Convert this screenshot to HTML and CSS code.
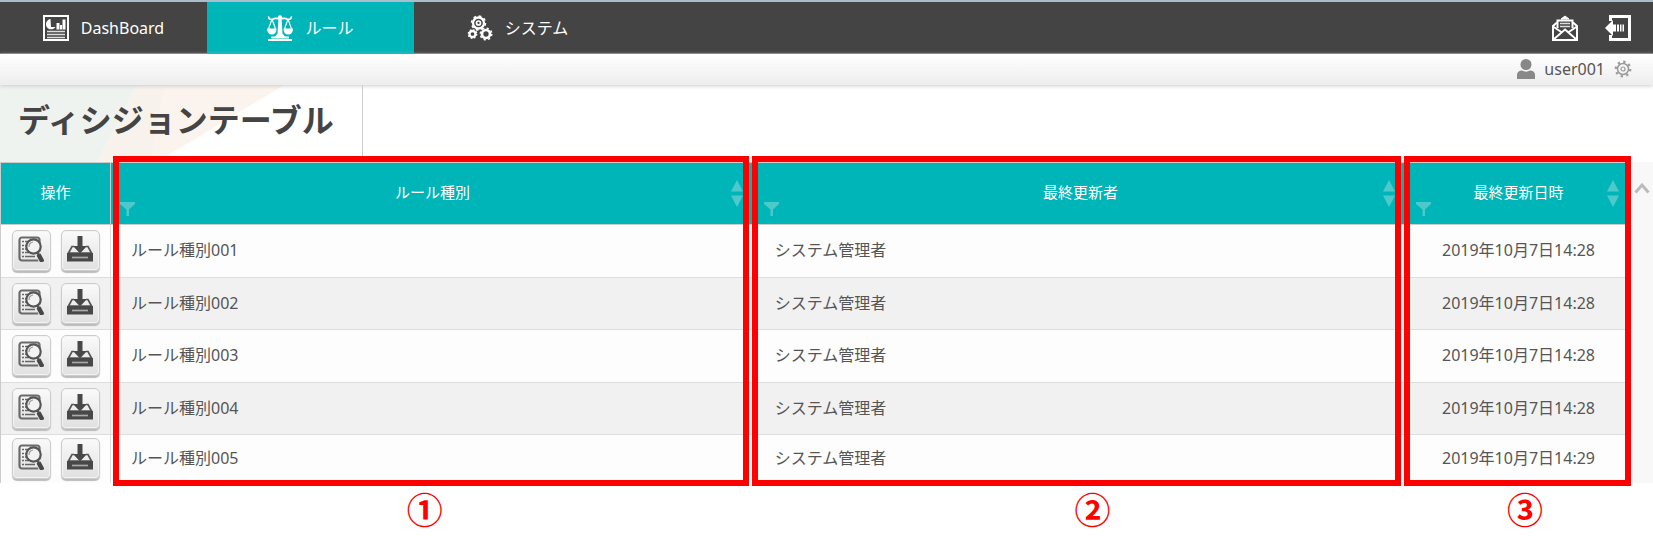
FILE: index.html
```html
<!DOCTYPE html>
<html lang="ja">
<head>
<meta charset="utf-8">
<title>ディシジョンテーブル</title>
<link rel="stylesheet" href="styles.css">
</head>
<body>
<svg class="sprite" aria-hidden="true">
  <symbol id="i-view" viewBox="0 0 26 26">
    <rect x="1.5" y="1.500" width="20" height="23" rx="2.500" fill="none" stroke="#6a6a6a" stroke-width="2.200"/>
    <path d="M4 5.500h2M4 9.500h2M4 13h2M4 16.500h2M4 20.500h2M7 5.500h4M7 9.500h2M7 13h2M7 16.500h4M7 20.500h10" stroke="#666" stroke-width="1.700"/>
    <path d="M20 17l4.500 8" stroke="#ececec" stroke-width="7"/>
    <circle cx="15.500" cy="10.500" r="7.200" fill="#f2f2f2" stroke="#555" stroke-width="2.200"/>
    <path d="M11 11a5 5 0 0 1 4-5" fill="none" stroke="#999" stroke-width="1.200"/>
    <path d="M19 16l2 3" stroke="#555" stroke-width="2.500"/>
    <path d="M20.500 18.500l4 7.500" stroke="#484848" stroke-width="4.500"/>
  </symbol>
  <symbol id="i-save" viewBox="0 0 26 26">
    <path d="M10.500 0h5v10h4.500l-7 7.500L6 10h4.500z" fill="#484848"/>
    <path d="M7 10.500H5L1.500 17h23L21 10.500h-2" fill="none" stroke="#555" stroke-width="1.700"/>
    <path d="M0 17h26v8.500H0z" fill="#484848"/>
    <path d="M5 21.500h16" stroke="#aaa" stroke-width="1.700"/>
  </symbol>
  <symbol id="i-filter" viewBox="0 0 15 14">
    <path d="M0 0h15v2L9 7.500V14H6.500V7.500L0 2z" fill="currentColor"/>
  </symbol>
  <symbol id="i-sort" viewBox="0 0 12 27">
    <path d="M6 0l6 11.500H0zM0 15.500h12L6 27z" fill="currentColor"/>
  </symbol>
</svg>

<header class="topbar">
  <nav class="tabs">
    <a class="tab" href="#">
      <svg class="icon" viewBox="0 0 26 26">
        <rect x="1" y="1" width="24" height="24" fill="none" stroke="#fff" stroke-width="2"/>
        <path d="M7.500 4a5.200 5.200 0 1 0 5 8H8z" fill="#fff"/>
        <path d="M13.500 8h3v6.500h-3zM17 10h2v4.500h-2zM19.500 4.500h3v10h-3z" fill="#fff"/>
        <path d="M4 16.500h18M4 19.500h18M4 22.500h18" stroke="#ddd" stroke-width="1.500"/>
      </svg>
      <span>DashBoard</span>
    </a>
    <a class="tab tab-active" href="#">
      <svg class="icon" viewBox="0 0 26 26" fill="#fff">
        <path d="M2 1.500c-1 2 1 3.500 4 2.500 2.500-1.500 4.500-.5 7 0 2.500-.5 4.500-1.500 7 0 3 1 5-.5 4-2.500" fill="none" stroke="#fff" stroke-width="1.800"/>
        <circle cx="13" cy="2.500" r="2.200"/>
        <path d="M11.500 3h3l1 15.500 3 3.500h-11l3-3.500z"/>
        <path d="M5 4L1.500 14M5 4l3.500 10M21 4l-3.500 10M21 4l3.500 10" fill="none" stroke="#fff" stroke-width="1.200"/>
        <path d="M0 13.500h9.500c0 4-2 6-4.500 6s-5-2-5-6zM16.500 13.500H26c0 4-2 6-5 6s-4.500-2-4.500-6z"/>
        <path d="M4 21.500h18v2H4zM1 24h24v2H1z"/>
      </svg>
      <span>ルール</span>
    </a>
    <a class="tab" href="#">
      <svg class="icon" viewBox="0 0 26 26" fill="none" stroke="#fff">
        <circle cx="11.500" cy="8" r="5.500" stroke-width="2.300"/>
        <circle cx="11.500" cy="8" r="7" stroke-width="1.500" stroke-dasharray="2.700 2.800"/>
        <circle cx="11.500" cy="8" r="2" stroke-width="1.700"/>
        <circle cx="5.500" cy="19" r="3" stroke-width="2.300"/>
        <circle cx="5.500" cy="19" r="4.300" stroke-width="1.200" stroke-dasharray="1.700 1.680"/>
        <circle cx="19" cy="19" r="4" stroke-width="2.700"/>
        <circle cx="19" cy="19" r="5.800" stroke-width="1.400" stroke-dasharray="2.200 2.350"/>
      </svg>
      <span>システム</span>
    </a>
  </nav>
  <div class="tools">
    <button class="tool" type="button" aria-label="メール">
      <svg class="icon" viewBox="0 0 26 26" fill="none" stroke="#fff" stroke-width="2">
        <path d="M5 7.500L1 11v14h24V11l-4-3.500"/>
        <path d="M1 11.500l9 6M25 11.500l-9 6M1.500 24.500L13 14.500l11.500 10"/>
        <path d="M5.500 13V5.500h15V13"/>
        <path d="M8 8.500h10M8 11.500h10" stroke="#ddd" stroke-width="1.500"/>
        <path d="M9 4l4-3 4 3z" fill="#fff" stroke-width="1"/>
      </svg>
    </button>
    <button class="tool" type="button" aria-label="ログアウト">
      <svg class="icon" viewBox="0 0 26 26">
        <path d="M5.500 6V1.500h19v23h-19V20" fill="none" stroke="#fff" stroke-width="3"/>
        <path d="M0 13l8-8v4.500h3v7H8V21zM12 9.500h2v7h-2zM15 9.500h1.500v7H15zM17.500 9.500H19v7h-1.500z" fill="#fff"/>
      </svg>
    </button>
  </div>
</header>

<div class="userbar">
  <svg class="user-icon" viewBox="0 0 18 20" fill="#888">
    <circle cx="9" cy="5.500" r="5.500"/>
    <path d="M0 20v-4c0-3 2-4.500 5-4.500 2.500 1.500 5.500 1.500 8 0 3 0 5 1.500 5 4.500v4z"/>
  </svg>
  <span>user001</span>
  <button class="gear" type="button" aria-label="設定">
    <svg class="gear-icon" viewBox="0 0 18 18" fill="none" stroke="#999">
      <circle cx="9" cy="9" r="5.500" stroke-width="1.500"/>
      <circle cx="9" cy="9" r="7.300" stroke-width="2.200" stroke-dasharray="2.300 3.430"/>
      <circle cx="9" cy="9" r="2" stroke-width="1.200"/>
    </svg>
  </button>
</div>

<div class="title">
  <svg class="title-art" viewBox="0 0 362 77" preserveAspectRatio="xMinYMin slice" aria-hidden="true">
    <path d="M0 0h137L97 77H0z" fill="#eff3f0"/>
    <path d="M137 0h147L157 77H97z" fill="#fbf3ed"/>
    <path d="M137 0h27l-14 77H97z" fill="#f8f2ec"/>
  </svg>
  <h1>ディシジョンテーブル</h1>
</div>

<main class="panel">
  <div class="grid-wrap">
    <table class="rules">
      <thead>
        <tr>
          <th class="col-ops">操作</th>
          <th class="col-name">ルール種別<svg class="filter"><use href="#i-filter"/></svg><svg class="sort"><use href="#i-sort"/></svg></th>
          <th>最終更新者<svg class="filter"><use href="#i-filter"/></svg><svg class="sort"><use href="#i-sort"/></svg></th>
          <th class="col-date">最終更新日時<svg class="filter"><use href="#i-filter"/></svg><svg class="sort"><use href="#i-sort"/></svg></th>
        </tr>
      </thead>
      <tbody>
        <tr>
          <td><div class="ops"><button class="op" type="button" aria-label="参照"><svg><use href="#i-view"/></svg></button><button class="op" type="button" aria-label="保存"><svg><use href="#i-save"/></svg></button></div></td>
          <td>ルール種別001</td><td>システム管理者</td><td class="date">2019年10月7日14:28</td>
        </tr>
        <tr>
          <td><div class="ops"><button class="op" type="button" aria-label="参照"><svg><use href="#i-view"/></svg></button><button class="op" type="button" aria-label="保存"><svg><use href="#i-save"/></svg></button></div></td>
          <td>ルール種別002</td><td>システム管理者</td><td class="date">2019年10月7日14:28</td>
        </tr>
        <tr>
          <td><div class="ops"><button class="op" type="button" aria-label="参照"><svg><use href="#i-view"/></svg></button><button class="op" type="button" aria-label="保存"><svg><use href="#i-save"/></svg></button></div></td>
          <td>ルール種別003</td><td>システム管理者</td><td class="date">2019年10月7日14:28</td>
        </tr>
        <tr>
          <td><div class="ops"><button class="op" type="button" aria-label="参照"><svg><use href="#i-view"/></svg></button><button class="op" type="button" aria-label="保存"><svg><use href="#i-save"/></svg></button></div></td>
          <td>ルール種別004</td><td>システム管理者</td><td class="date">2019年10月7日14:28</td>
        </tr>
        <tr>
          <td><div class="ops"><button class="op" type="button" aria-label="参照"><svg><use href="#i-view"/></svg></button><button class="op" type="button" aria-label="保存"><svg><use href="#i-save"/></svg></button></div></td>
          <td>ルール種別005</td><td>システム管理者</td><td class="date">2019年10月7日14:29</td>
        </tr>
      </tbody>
    </table>
    <div class="marks">
      <div class="mark"><span class="mark-no no-1">①</span></div>
      <div class="mark"><span class="mark-no no-2">②</span></div>
      <div class="mark"><span class="mark-no no-3">③</span></div>
    </div>
  </div>
  <div class="scroll">
    <svg class="scroll-up" viewBox="0 0 16 12"><path d="M1.500 10.500L8 3l6.500 7.500" fill="none" stroke="#bbb" stroke-width="3"/></svg>
  </div>
</main>
</body>
</html>
```
FILE: styles.css
```css
* {
  box-sizing: border-box;
}

body {
  min-height: 100vh;
  margin: 0;
  padding-bottom: 77px;
  background: #fff;
  color: #555;
  font: 16px/24px "Noto Sans", "Noto Sans CJK JP", sans-serif;
}

button {
  padding: 0;
  border: 0;
  background: none;
  font: inherit;
}

svg {
  display: block;
}

.sprite {
  display: none;
}

.topbar {
  display: flex;
  justify-content: space-between;
  height: 54px;
  border-top: 2px solid #a9bdcc;
  border-bottom: 1px solid #777;
  background: #444;
}

.tabs {
  display: flex;
}

.tab {
  display: flex;
  align-items: center;
  justify-content: center;
  gap: 12px;
  width: 207px;
  color: #fff;
  text-decoration: none;
}

.tab-active {
  background: #00b5b8;
}

.icon {
  width: 26px;
  height: 26px;
}

.tools {
  display: flex;
  align-items: center;
  gap: 27px;
  padding-right: 22px;
}

.userbar {
  position: relative;
  z-index: 1;
  display: flex;
  align-items: center;
  justify-content: flex-end;
  gap: 9px;
  height: 31px;
  padding: 0 21px 2px 0;
  background: linear-gradient(#fff, #ededed);
  box-shadow: 0 1px 4px #ccc;
}

.user-icon {
  width: 18px;
  height: 20px;
}

.gear-icon {
  width: 18px;
  height: 18px;
}

.title {
  position: relative;
  display: flex;
  width: 363px;
  height: 77px;
  padding: 11px 18px;
  border-right: 1px solid #ccc;
}

.title-art {
  position: absolute;
  inset: 0;
  width: 100%;
  height: 100%;
}

.title h1 {
  position: relative;
  margin: 0;
  color: #444;
  font-size: 32px;
  line-height: 48px;
  white-space: nowrap;
}

.panel {
  display: flex;
}

.grid-wrap {
  position: relative;
  flex: 1;
}

.rules {
  width: 100%;
  table-layout: fixed;
  border-collapse: separate;
  border-spacing: 0;
  border-top: 1px solid #ccc;
  border-left: 1px solid #ccc;
}

.rules th {
  position: relative;
  height: 62px;
  padding: 0 0 3px;
  border-right: 1px solid #ccc;
  border-bottom: 1px solid #ccc;
  background: #00b5b8;
  color: #fff;
  font-size: 15px;
  font-weight: 400;
}

.rules .col-ops {
  width: 110px;
}

.rules .col-name {
  width: 39.5%;
}

.rules .col-date {
  width: 224px;
}

.rules td {
  height: 53px;
  padding: 0 0 2px 20px;
  border-right: 1px solid #ddd;
  border-bottom: 1px solid #ddd;
  background: #fdfdfd;
}

.rules tr:nth-child(even) td {
  height: 52px;
  background: #f1f1f1;
}

.rules tr:last-child td {
  height: 48px;
  border-bottom: 0;
}

.rules td:first-child {
  padding: 0 0 1px;
}

.rules .date {
  padding: 0 0 2px;
  text-align: center;
}

.filter {
  position: absolute;
  left: 9px;
  bottom: 8px;
  width: 15px;
  height: 14px;
  color: #4dc9cb;
}

.sort {
  position: absolute;
  top: 17px;
  right: 11px;
  width: 12px;
  height: 27px;
  color: #4dc9cb;
}

.ops {
  display: flex;
  justify-content: center;
  gap: 10px;
}

.op {
  display: flex;
  justify-content: center;
  width: 39px;
  height: 41px;
  padding-top: 5px;
  border: 1px solid #ccc;
  border-radius: 5px;
  background: linear-gradient(#fafafa, #e0e0e0);
  box-shadow: inset 0 0 0 1px #f4f4f4, 0 2px 1px #bbb;
}

.op svg {
  width: 26px;
  height: 26px;
}

.marks {
  position: absolute;
  top: -6px;
  right: 0;
  bottom: -3px;
  left: 113px;
  display: grid;
  grid-template-columns: 636fr 649fr 227px;
  gap: 3px;
  pointer-events: none;
}

.mark {
  position: relative;
  border: 6px solid #f00;
}

.mark-no {
  position: absolute;
  top: 100%;
  padding-top: 4px;
  color: #f00;
  font: bold 36px/48px "Noto Sans CJK JP", sans-serif;
  transform: translateX(-50%);
}

.no-1 {
  left: 49%;
}

.no-2 {
  left: 52.5%;
}

.no-3 {
  left: 53.5%;
}

.scroll {
  display: flex;
  justify-content: center;
  width: 22px;
  padding-top: 20px;
  background: #f8f8f8;
}

.scroll-up {
  width: 16px;
  height: 12px;
}
```
